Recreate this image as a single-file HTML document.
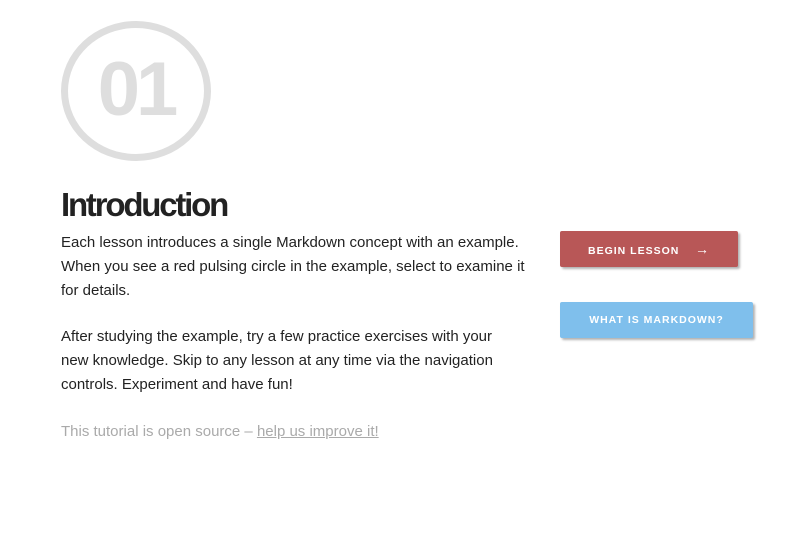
<!DOCTYPE html>
<html><head><style>
body{margin:0;background:#fff;font-family:"Liberation Sans",sans-serif;}
.c{position:absolute;left:61px;top:21px;width:136px;height:126px;border:7px solid #dedede;border-radius:50%;}
.n{position:absolute;left:61px;top:45px;width:150px;text-align:center;font-size:76px;font-weight:bold;color:#dedede;letter-spacing:-4px;line-height:90px;}
h1{position:absolute;left:61px;top:186px;margin:0;font-size:33px;letter-spacing:-2.2px;color:#222;font-weight:bold;}
.p{position:absolute;left:61px;width:466px;font-size:15px;line-height:24px;color:#222;margin:0;}
.b{position:absolute;left:560px;height:36px;line-height:37px;color:#fff;font-size:10.5px;font-weight:bold;letter-spacing:1px;text-align:center;border-radius:2px;box-shadow:2px 2px 2px rgba(0,0,0,.3);}
.b span{font-size:14px;font-weight:normal;}
</style></head><body>
<div class="c"></div><div class="n">01</div>
<h1>Introduction</h1>
<p class="p" style="top:231px">Each lesson introduces a single Markdown concept with an example. When you see a red pulsing circle in the example, select to examine it for details.</p>
<p class="p" style="top:325px;width:440px">After studying the example, try a few practice exercises with your new knowledge. Skip to any lesson at any time via the navigation controls. Experiment and have fun!</p>
<p class="p" style="top:420px;color:#aaa">This tutorial is open source – <u>help us improve it!</u></p>
<div class="b" style="top:231px;width:178px;background:#b85757">BEGIN LESSON &nbsp;&nbsp;&nbsp;<span>→</span></div>
<div class="b" style="top:302px;width:193px;background:#7fbfec">WHAT IS MARKDOWN?</div>
</body></html>
